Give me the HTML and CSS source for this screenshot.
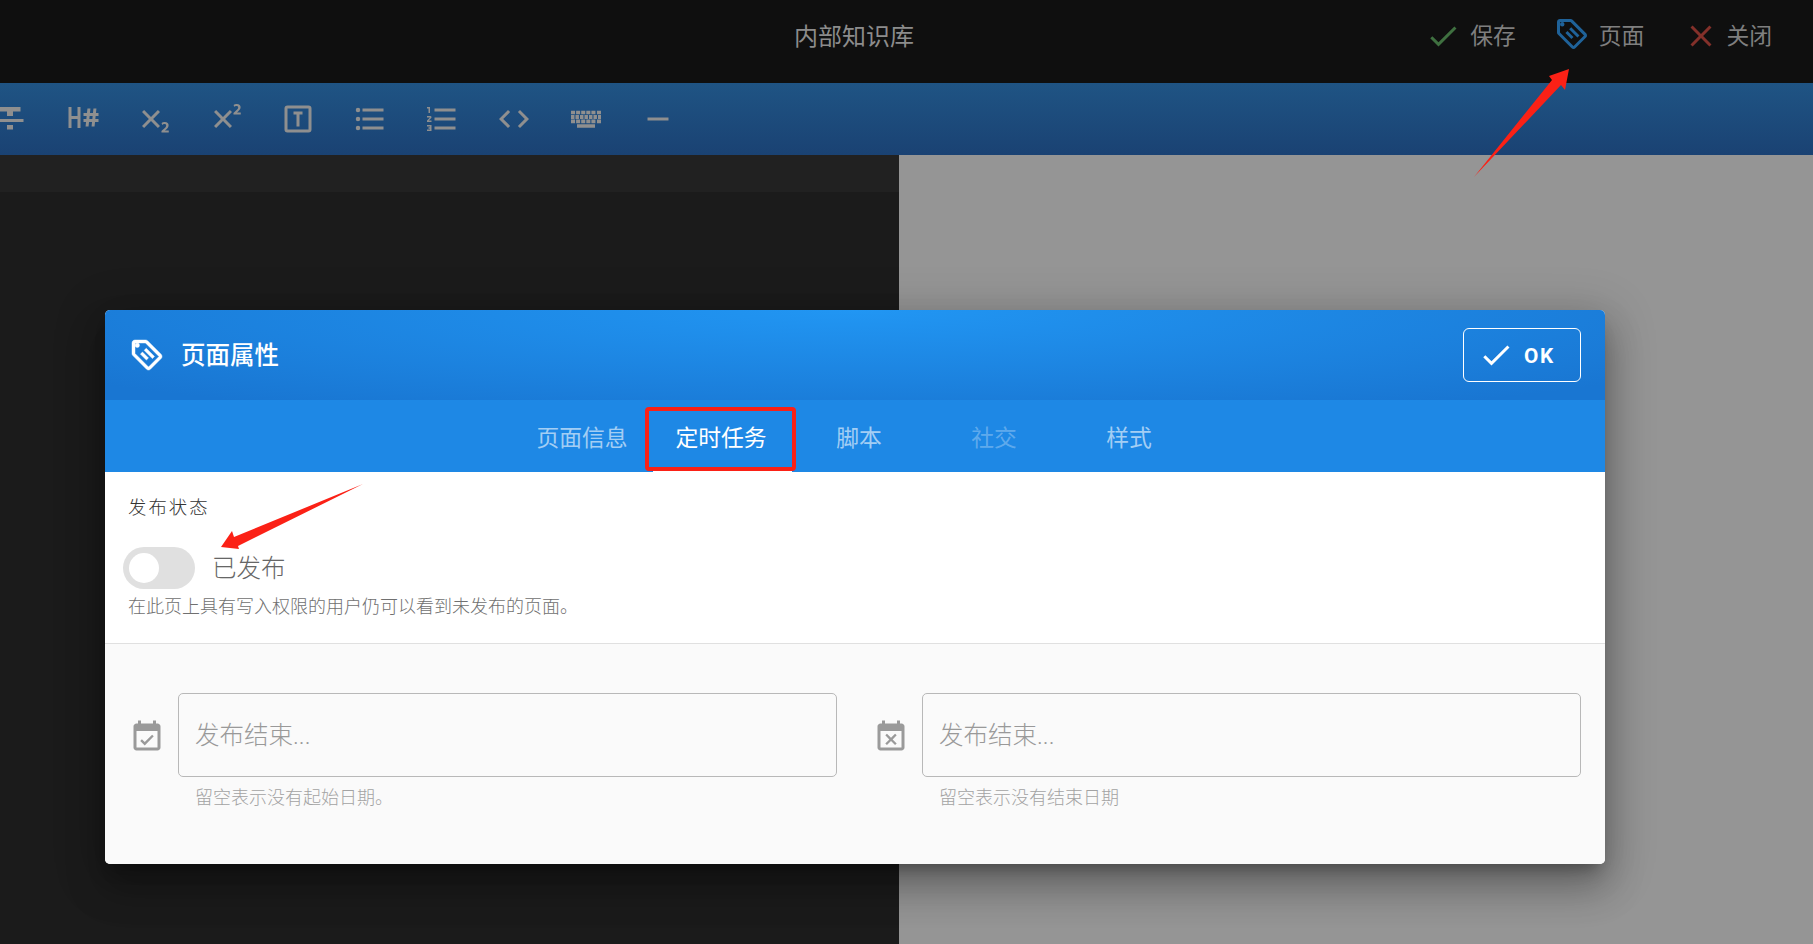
FILE: index.html
```html
<!DOCTYPE html>
<html lang="zh-CN">
<head>
  <meta charset="UTF-8">
  <title>页面属性</title>
  <link rel="stylesheet" href="styles.css">
</head>
<body>
  <header class="topbar">
    <div class="site-title">内部知识库</div>
    <div class="actions">
      <div class="action">
        <svg class="mdi save" viewBox="0 0 24 24"><path d="M21,7L9,19L3.5,13.5L4.91,12.09L9,16.17L19.59,5.59L21,7Z"/></svg>
        <span>保存</span>
      </div>
      <div class="action">
        <svg class="mdi page tag-up" viewBox="0 0 24 24"><path d="M5.5,7A1.5,1.5 0 0,0 7,5.5A1.5,1.5 0 0,0 5.5,4A1.5,1.5 0 0,0 4,5.5A1.5,1.5 0 0,0 5.5,7M21.41,11.58C21.77,11.94 22,12.44 22,13C22,13.55 21.78,14.05 21.41,14.41L14.41,21.41C14.05,21.77 13.55,22 13,22C12.45,22 11.95,21.77 11.58,21.41L2.59,12.41C2.22,12.05 2,11.55 2,11V4C2,2.89 2.89,2 4,2H11C11.55,2 12.05,2.22 12.41,2.58L21.41,11.58M13,20L20,13L11,4H4V11L13,20M10.09,8.91L11.5,7.5L17,13L15.59,14.41L10.09,8.91M7.59,11.41L9,10L13,14L11.59,15.41L7.59,11.41Z"/></svg>
        <span>页面</span>
      </div>
      <div class="action last">
        <svg class="mdi close" viewBox="0 0 24 24"><path d="M19,6.41L17.59,5L12,10.59L6.41,5L5,6.41L10.59,12L5,17.59L6.41,19L12,13.41L17.59,19L19,17.59L13.41,12L19,6.41Z"/></svg>
        <span>关闭</span>
      </div>
    </div>
  </header>

  <nav class="toolbar">
    <div class="tool"><svg class="mdi" viewBox="0 0 24 24"><path d="M3,14H21V12H3M5,4V7H10V10H14V7H19V4M10,19H14V16H10V19Z"/></svg></div>
    <div class="tool"><svg class="mdi" viewBox="0 0 24 24"><path d="M3,4H5V10H9V4H11V18H9V12H5V18H3V4M13,8H15.31L15.63,5H17.63L17.31,8H19.31L19.63,5H21.63L21.31,8H23V10H21.1L20.9,12H23V14H20.69L20.37,17H18.37L18.69,14H16.69L16.37,17H14.37L14.69,14H13V12H14.9L15.1,10H13V8M17.1,10L16.9,12H18.9L19.1,10H17.1Z"/></svg></div>
    <div class="tool"><svg class="mdi" viewBox="0 0 24 24"><path d="M16,7.41L11.41,12L16,16.59L14.59,18L10,13.41L5.41,18L4,16.59L8.59,12L4,7.41L5.41,6L10,10.59L14.59,6L16,7.41M21.85,21.03H16.97V20.03L17.86,19.23C18.62,18.58 19.18,18.04 19.56,17.6C19.93,17.16 20.12,16.75 20.13,16.36C20.14,16.08 20.05,15.85 19.86,15.66C19.68,15.5 19.39,15.38 19,15.38C18.69,15.38 18.42,15.44 18.16,15.56L17.5,15.94L17.05,14.77C17.32,14.56 17.64,14.38 18.03,14.24C18.42,14.1 18.85,14 19.32,14C20.1,14.04 20.7,14.25 21.12,14.66C21.54,15.07 21.75,15.59 21.75,16.23C21.74,16.79 21.56,17.31 21.22,17.78C20.87,18.25 20.44,18.71 19.92,19.16L19.27,19.72V19.74H21.85V21.03Z"/></svg></div>
    <div class="tool"><svg class="mdi" viewBox="0 0 24 24"><path d="M16,7.41L11.41,12L16,16.59L14.59,18L10,13.41L5.41,18L4,16.59L8.59,12L4,7.41L5.41,6L10,10.59L14.59,6L16,7.41M21.85,9H16.97V8L17.86,7.18C18.62,6.54 19.18,6 19.56,5.55C19.93,5.11 20.12,4.7 20.13,4.32C20.14,4.04 20.05,3.8 19.86,3.62C19.68,3.43 19.39,3.34 19,3.33C18.69,3.34 18.42,3.4 18.16,3.5L17.5,3.89L17.05,2.72C17.32,2.5 17.64,2.33 18.03,2.19C18.42,2.05 18.85,2 19.32,2C20.1,2 20.7,2.2 21.12,2.61C21.54,3 21.75,3.54 21.75,4.18C21.74,4.74 21.56,5.26 21.22,5.73C20.87,6.19 20.44,6.66 19.92,7.12L19.27,7.68V7.7H21.85V9Z"/></svg></div>
    <div class="tool"><svg class="mdi" viewBox="0 0 24 24"><path d="M9,7H15V9H13V17H11V9H9V7M5,3H19A2,2 0 0,1 21,5V19A2,2 0 0,1 19,21H5A2,2 0 0,1 3,19V5A2,2 0 0,1 5,3M5,5V19H19V5H5Z"/></svg></div>
    <div class="tool"><svg class="mdi" viewBox="0 0 24 24"><path d="M7,5H21V7H7V5M7,13V11H21V13H7M4,4.5A1.5,1.5 0 0,1 5.5,6A1.5,1.5 0 0,1 4,7.5A1.5,1.5 0 0,1 2.5,6A1.5,1.5 0 0,1 4,4.5M4,10.5A1.5,1.5 0 0,1 5.5,12A1.5,1.5 0 0,1 4,13.5A1.5,1.5 0 0,1 2.5,12A1.5,1.5 0 0,1 4,10.5M7,19V17H21V19H7M4,16.5A1.5,1.5 0 0,1 5.5,18A1.5,1.5 0 0,1 4,19.5A1.5,1.5 0 0,1 2.5,18A1.5,1.5 0 0,1 4,16.5Z"/></svg></div>
    <div class="tool"><svg class="mdi" viewBox="0 0 24 24"><path d="M7,13V11H21V13H7M7,19V17H21V19H7M7,7V5H21V7H7M3,8V5H2V4H4V8H3M2,17V16H5V20H2V19H4V18.5H3V17.5H4V17H2M4.25,10A0.75,0.75 0 0,1 5,10.75C5,10.95 4.92,11.14 4.79,11.27L3.12,13H5V14H2V13.08L4,11H2V10H4.25Z"/></svg></div>
    <div class="tool"><svg class="mdi" viewBox="0 0 24 24"><path d="M14.6,16.6L19.2,12L14.6,7.4L16,6L22,12L16,18L14.6,16.6M9.4,16.6L4.8,12L9.4,7.4L8,6L2,12L8,18L9.4,16.6Z"/></svg></div>
    <div class="tool"><svg class="mdi" viewBox="0 0 24 24"><path d="M2,6.5h2.7v2.4H2zM5.4,6.5h2.7v2.4H5.4zM8.8,6.5h2.7v2.4H8.8zM12.2,6.5h2.7v2.4h-2.7zM15.6,6.5h2.7v2.4h-2.7zM19.3,6.5H22v2.4h-2.7zM2,9.4h2.3v2.6H2zM5,9.4h2.3v2.6H5zM8,9.4h2.3v2.6H8zM11,9.4h2.3v2.6H11zM14,9.4h2.3v2.6H14zM17,9.4h2.3v2.6H17zM20,9.4h2v2.6h-2zM2,12.4h2.7v2.4H2zM5.4,12.4h2.7v2.4H5.4zM8.8,12.4h2.7v2.4H8.8zM12.2,12.4h2.7v2.4h-2.7zM15.6,12.4h2.7v2.4h-2.7zM19.3,12.4H22v2.4h-2.7zM6,15.5h12v2.4H6z"/></svg></div>
    <div class="tool"><svg class="mdi" viewBox="0 0 24 24"><path d="M19,13H5V11H19V13Z"/></svg></div>
  </nav>

  <main class="workspace">
    <div class="editor"><div class="editor-band"></div></div>
    <div class="preview"></div>
  </main>

  <section class="dialog">
    <div class="dialog-head">
      <svg class="mdi head-tag" viewBox="0 0 24 24"><path d="M5.5,7A1.5,1.5 0 0,0 7,5.5A1.5,1.5 0 0,0 5.5,4A1.5,1.5 0 0,0 4,5.5A1.5,1.5 0 0,0 5.5,7M21.41,11.58C21.77,11.94 22,12.44 22,13C22,13.55 21.78,14.05 21.41,14.41L14.41,21.41C14.05,21.77 13.55,22 13,22C12.45,22 11.95,21.77 11.58,21.41L2.59,12.41C2.22,12.05 2,11.55 2,11V4C2,2.89 2.89,2 4,2H11C11.55,2 12.05,2.22 12.41,2.58L21.41,11.58M13,20L20,13L11,4H4V11L13,20M10.09,8.91L11.5,7.5L17,13L15.59,14.41L10.09,8.91M7.59,11.41L9,10L13,14L11.59,15.41L7.59,11.41Z"/></svg>
      <h2 class="dialog-title">页面属性</h2>
      <button class="ok-btn">
        <svg class="mdi" viewBox="0 0 24 24"><path d="M21,7L9,19L3.5,13.5L4.91,12.09L9,16.17L19.59,5.59L21,7Z"/></svg>
        <span>OK</span>
      </button>
    </div>

    <div class="tabs">
      <div class="tab wide">页面信息</div>
      <div class="tab wide active">定时任务</div>
      <div class="tab">脚本</div>
      <div class="tab disabled">社交</div>
      <div class="tab">样式</div>
    </div>

    <div class="publish">
      <div class="publish-label">发布状态</div>
      <div class="switch-row">
        <div class="switch"><div class="knob"></div></div>
        <span class="switch-text">已发布</span>
      </div>
      <div class="publish-hint">在此页上具有写入权限的用户仍可以看到未发布的页面。</div>
    </div>

    <div class="dates">
      <div class="date-field">
        <div class="date-row">
          <svg class="mdi" viewBox="0 0 24 24"><path d="M19,19H5V8H19M19,3H18V1H16V3H8V1H6V3H5C3.9,3 3,3.9 3,5V19C3,20.1 3.9,21 5,21H19C20.1,21 21,20.1 21,19V5C21,3.9 20.1,3 19,3M16.5,11.5L15.4,10.5L10.5,15.4L8.6,13.5L7.5,14.6L10.5,17.6Z"/></svg>
          <input class="date-input" type="text" placeholder="发布结束...">
        </div>
        <div class="date-hint">留空表示没有起始日期。</div>
      </div>
      <div class="date-field">
        <div class="date-row">
          <svg class="mdi" viewBox="0 0 24 24"><path d="M19,19H5V8H19M19,3H18V1H16V3H8V1H6V3H5C3.9,3 3,3.9 3,5V19C3,20.1 3.9,21 5,21H19C20.1,21 21,20.1 21,19V5C21,3.9 20.1,3 19,3M9.3,17.4L12,14.7L14.7,17.4L15.8,16.3L13.1,13.6L15.8,10.9L14.7,9.8L12,12.5L9.3,9.8L8.2,10.9L10.9,13.6L8.2,16.3Z"/></svg>
          <input class="date-input" type="text" placeholder="发布结束...">
        </div>
        <div class="date-hint">留空表示没有结束日期</div>
      </div>
    </div>
  </section>

  <!-- red marks drawn on top of the screenshot -->
  <svg class="marks" viewBox="0 0 1813 944">
    <polygon points="1474,177 1552,80 1549,76 1569,69 1565,90 1561,85"/>
    <polygon points="363,484 234,537 232,531 221,547 239,549 238,546"/>
    <rect x="647" y="409" width="147" height="60" rx="2"/>
  </svg>
</body>
</html>
```

FILE: styles.css
```css
* {
  box-sizing: border-box;
}
html, body {
  height: 100%;
}
body {
  margin: 0;
  display: flex;
  flex-direction: column;
  overflow: hidden;
  background-color: #1b1b1b;
  font-family: Roboto, "Noto Sans CJK SC", sans-serif;
}
.mdi {
  width: 36px;
  height: 36px;
  flex: none;
  fill: currentColor;
}

/* top bar */
.topbar {
  height: 83px;
  flex: none;
  display: flex;
  align-items: center;
  padding-bottom: 12px;
  background-color: #0f0f0f;
  color: #7f7f7f;
}
.site-title {
  flex: 1;
  padding: 0 0 2px 283px;
  text-align: center;
  font-size: 24px;
  color: #8c8c8c;
}
.actions {
  display: flex;
  gap: 38px;
  padding-right: 41px;
}
.action {
  display: flex;
  align-items: center;
  gap: 9px;
  font-size: 22.8px;
}
.action span {
  margin-top: -3px;
}
.action.last {
  gap: 7px;
  margin-left: 1px;
}
.mdi.save { color: #3f7040; }
.mdi.page { color: #1f6299; }
.mdi.close { color: #84302a; }
.tag-up { margin-top: -4px; }

/* editor toolbar */
.toolbar {
  height: 72px;
  flex: none;
  display: flex;
  margin-left: -26px;
  background: linear-gradient(#1f5484, #1a4273);
  color: #8f8f8f;
}
.tool {
  width: 72px;
  display: flex;
  align-items: center;
  justify-content: center;
}

/* page behind the dialog */
.workspace {
  flex: 1;
  display: flex;
}
.editor {
  width: 899px;
  background-color: #1b1b1b;
}
.editor-band {
  height: 37px;
  background-color: #212121;
}
.preview {
  flex: 1;
  background-color: #959595;
}

/* dialog */
.dialog {
  position: absolute;
  left: 105px;
  top: 310px;
  width: 1500px;
  height: 554px;
  display: flex;
  flex-direction: column;
  border-radius: 5px;
  overflow: hidden;
  background-color: #fff;
  box-shadow: 0 11px 15px -7px rgba(0,0,0,.3), 0 24px 38px 3px rgba(0,0,0,.2), 0 9px 46px 8px rgba(0,0,0,.18);
}
.dialog-head {
  height: 90px;
  flex: none;
  display: flex;
  align-items: center;
  gap: 17px;
  padding: 0 24px;
  background: radial-gradient(ellipse 65% 130% at 50% 0, #2196f3, #1976d2);
  color: #fff;
}
.head-tag {
  stroke: currentColor;
  stroke-width: .3;
}
.dialog-title {
  flex: 1;
  margin: 0 0 0 -1px;
  padding-bottom: 4px;
  font-size: 24.5px;
  font-weight: 500;
}
.ok-btn {
  width: 118px;
  height: 54px;
  display: flex;
  align-items: center;
  gap: 10px;
  padding: 2px 0 0 14px;
  border: 1px solid #fff;
  border-radius: 6px;
  background: transparent;
  color: #fff;
  font-family: inherit;
  font-size: 20.8px;
  font-weight: 700;
  letter-spacing: 1.6px;
}
.ok-btn .mdi {
  margin-top: -2px;
}
.tabs {
  height: 72px;
  flex: none;
  display: flex;
  justify-content: center;
  background-color: #1e88e5;
}
.tab {
  width: 135px;
  flex: none;
  padding-top: 2px;
  display: flex;
  align-items: center;
  justify-content: center;
  white-space: nowrap;
  font-size: 22.8px;
  color: rgba(255,255,255,.6);
  border-bottom: 2px solid transparent;
}
.tab.wide {
  width: 139px;
  padding-right: 2px;
}
.tab.active {
  color: #fff;
  border-bottom-color: #fff;
}
.tab.disabled {
  color: rgba(255,255,255,.3);
}

.publish {
  height: 172px;
  flex: none;
  padding: 21px 24px 0 23px;
  border-bottom: 1px solid #e0e0e0;
}
.publish-label {
  height: 30px;
  line-height: 30px;
  font-size: 18.4px;
  font-weight: 300;
  letter-spacing: 2px;
  color: #333;
}
.switch-row {
  display: flex;
  align-items: center;
  gap: 17px;
  margin: 24px 0 0 -5px;
}
.switch {
  width: 72px;
  height: 42px;
  padding: 6px;
  border-radius: 21px;
  background-color: #e0e0e0;
}
.knob {
  width: 30px;
  height: 30px;
  border-radius: 50%;
  background-color: #fff;
}
.switch-text {
  margin-top: -4px;
  font-size: 24.5px;
  font-weight: 300;
  color: #666;
}
.publish-hint {
  margin-top: 5px;
  font-size: 18px;
  font-weight: 300;
  line-height: 26px;
  color: #707070;
}

.dates {
  flex: 1;
  display: grid;
  grid-template-columns: 708px 708px;
  gap: 36px;
  padding: 49px 24px 0;
  background-color: #fafafa;
}
.date-row {
  display: flex;
  align-items: center;
  gap: 13px;
  color: #9a9a9a;
}
.date-row .mdi {
  margin-top: 3px;
}
.date-input {
  flex: 1;
  min-width: 0;
  height: 84px;
  padding: 0 16px;
  border: 1px solid #b8b8b8;
  border-radius: 5px;
  background: transparent;
  font-family: inherit;
  font-size: 24.5px;
  font-weight: 300;
}
.date-input::placeholder {
  color: #999;
  opacity: 1;
}
.date-hint {
  margin: 8px 0 0 66px;
  font-size: 18px;
  font-weight: 300;
  line-height: 26px;
  color: #a3a3a3;
}

/* annotations */
.marks {
  position: absolute;
  left: 0;
  top: 0;
  width: 1813px;
  height: 944px;
  pointer-events: none;
}
.marks polygon {
  fill: #fb2116;
}
.marks rect {
  fill: none;
  stroke: #fb2116;
  stroke-width: 4;
}
```
